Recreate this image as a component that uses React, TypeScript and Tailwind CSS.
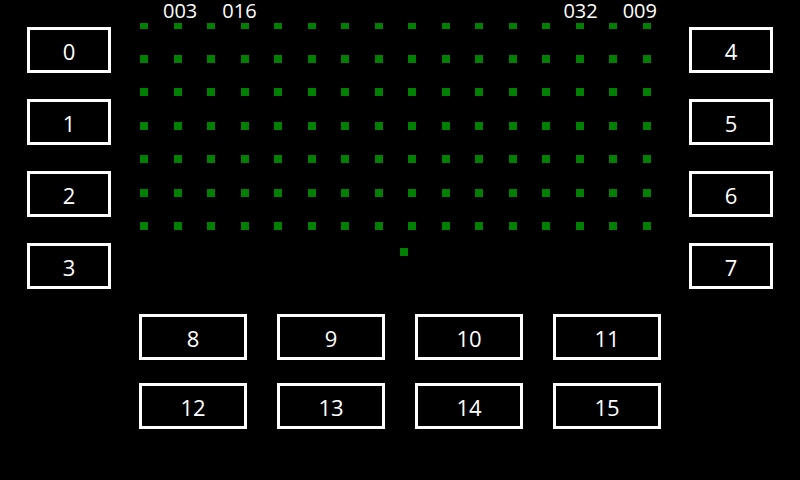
import React from "react";

const font = { fontFamily: "'Open Sans', 'Noto Sans', sans-serif" };

const ROWS = 7;
const COLS = 16;

const KeyBox: React.FC<{ label: string; wide?: boolean }> = ({ label, wide }) => (
  <div
    className={`flex h-[46px] items-center justify-center border-[3px] border-white pt-[2px] text-[22px] leading-none text-white ${
      wide ? "w-[108px]" : "w-[84px]"
    }`}
  >
    {label}
  </div>
);

export default function App() {
  return (
    <div className="flex h-[480px] w-[800px] overflow-hidden bg-black" style={font}>
      {/* left keys */}
      <div className="flex flex-col gap-[26px] pl-[27px] pt-[27px]">
        {["0", "1", "2", "3"].map((k) => (
          <KeyBox key={k} label={k} />
        ))}
      </div>

      {/* center field */}
      <div className="ml-[28px] flex w-[522px] flex-col">
        <div className="mt-[1px] flex h-[20px] justify-between pl-[24px] pr-[4px] text-[20px] leading-[20px] text-white">
          <div className="flex gap-[25px]">
            <span>003</span>
            <span>016</span>
          </div>
          <div className="flex gap-[25px]">
            <span>032</span>
            <span>009</span>
          </div>
        </div>

        <div className="relative h-[293px]">
          <div className="flex w-[512px] flex-col gap-[25.5px] pl-[1px]">
            {Array.from({ length: ROWS }).map((_, r) => (
              <div key={r} className="flex h-[8px] items-end justify-between">
                {Array.from({ length: COLS }).map((_, c) => (
                  <span
                    key={c}
                    className={`w-[8px] bg-[#008000] ${r === 0 ? "h-[6px]" : "h-[8px]"}`}
                  />
                ))}
              </div>
            ))}
          </div>
          {/* ball */}
          <span className="absolute left-[261px] top-[227px] h-[8px] w-[8px] bg-[#008000]" />
        </div>

        <div className="grid grid-cols-[repeat(4,108px)] gap-x-[30px] gap-y-[23px]">
          {["8", "9", "10", "11", "12", "13", "14", "15"].map((k) => (
            <KeyBox key={k} label={k} wide />
          ))}
        </div>
      </div>

      {/* right keys */}
      <div className="ml-[28px] flex flex-col gap-[26px] pt-[27px]">
        {["4", "5", "6", "7"].map((k) => (
          <KeyBox key={k} label={k} />
        ))}
      </div>
    </div>
  );
}
